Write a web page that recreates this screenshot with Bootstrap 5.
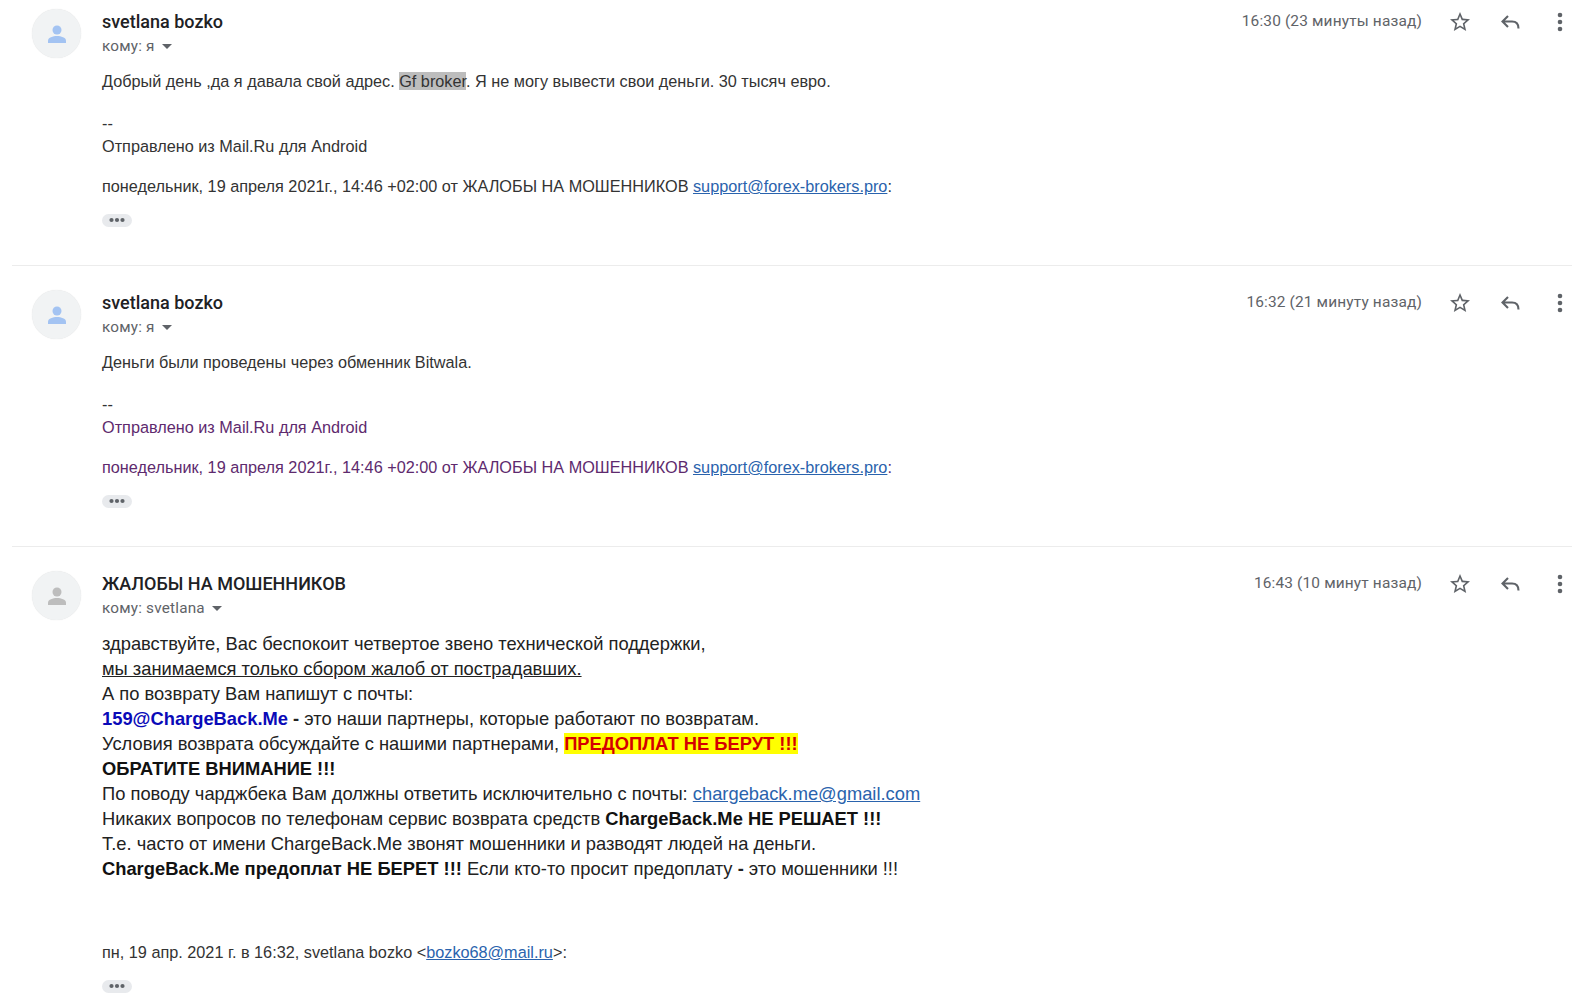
<!DOCTYPE html>
<html lang="ru">
<head>
<meta charset="utf-8">
<title>Переписка</title>
<link href="https://cdn.jsdelivr.net/npm/bootstrap@5.3.0/dist/css/bootstrap.min.css" rel="stylesheet">
<style>
html,body{height:100%;overflow:hidden}
body{background:#fff;color:#222;font-family:"Liberation Sans",Arial,sans-serif}
.mail-list{padding:0 18px 0 12px}
.msg{height:266px;margin-bottom:15px;border-bottom:1px solid #ececec;padding-top:10px}
.msg-last{height:441px;border-bottom:0;margin-bottom:0}
.ava{width:49px;height:49px;border-radius:50%;background:#f1f3f4;margin:-1px 21px 0 20px;flex:none;box-shadow:0 0 1px #ddd}
.msg-main{flex:1;min-width:0}
.sender{font:500 18px/24px Roboto,sans-serif;color:#202124}
.to{font:15.3px/20px Roboto,sans-serif;color:#5f6368;margin-top:2px;letter-spacing:.2px}
.caret-ico{display:inline-block;width:0;height:0;border:5px solid transparent;border-top-color:#5f6368;border-bottom:0;margin-left:3px;vertical-align:2px}
.side{margin-top:-1px}
.when{font:15.45px/24px Roboto,sans-serif;color:#5f6368;letter-spacing:.15px;margin:0 26px 2px 0}
.acts{gap:26px}
.acts svg{display:block;color:#5f6368;fill:currentColor}
.body-s{font-size:16.25px;line-height:23px;color:#333;margin-top:14px}
.gap-l{margin-top:19px}
.gap-m{margin-top:17px}
.hl{background:#bdbdbd}
.lnk{color:#2a63ad;text-decoration:underline}
.pur{color:#5e2a6e}
.more{display:block;width:30px;height:13px;background:#e8eaed;border-radius:7px;margin-top:16px;padding-top:3px}
.more svg{display:block;margin:0 auto;fill:#5f6368}
.body-b{font-size:18.33px;line-height:25px;color:#222;margin-top:13px}
.blue{color:#0a0ab8;font-weight:700}
.warn{background:#ff0;color:#d40000;font-weight:700}
.quote-l{font-size:16.25px;line-height:23px;color:#333;margin-top:60px}
.dark{color:#111}
</style>
</head>
<body>
<svg width="0" height="0" class="position-absolute">
<defs>
<symbol id="i-star" viewBox="0 0 24 24"><path d="M22 9.24l-7.190-.620L12 2 9.190 8.630 2 9.240l5.460 4.730L5.820 21 12 17.270 18.180 21l-1.630-7.030L22 9.240zM12 15.400l-3.760 2.270 1-4.280-3.320-2.880 4.380-.380L12 6.100l1.710 4.040 4.380.380-3.320 2.880 1 4.280L12 15.400z"/></symbol>
<symbol id="i-reply" viewBox="0 0 24 24"><path d="M10 6 4.500 11.500 10 17M4.500 11.500H14c4 0 6.500 2.500 6.500 7" fill="none" stroke="currentColor" stroke-width="2.100"/></symbol>
<symbol id="i-dots" viewBox="0 0 24 24"><circle cx="12" cy="5" r="2.300"/><circle cx="12" cy="12" r="2.300"/><circle cx="12" cy="19" r="2.300"/></symbol>
<symbol id="i-more" viewBox="0 0 18 6"><circle cx="3.500" cy="3" r="2.100"/><circle cx="9" cy="3" r="2.100"/><circle cx="14.500" cy="3" r="2.100"/></symbol>
<symbol id="i-user" viewBox="0 0 24 24"><circle cx="12" cy="8" r="4.500"/><path d="M3 21v-2.500C3 15.500 8 14 12 14s9 1.500 9 4.500V21H3z"/></symbol>
</defs>
</svg>

<div class="mail-list">

<div class="msg d-flex">
  <div class="ava d-flex align-items-center justify-content-center"><svg width="24" height="24" fill="#a3c3f2"><use href="#i-user"/></svg></div>
  <div class="msg-main">
    <div class="d-flex justify-content-between align-items-start">
      <div>
        <div class="sender">svetlana bozko</div>
        <div class="to">кому: я <span class="caret-ico"></span></div>
      </div>
      <div class="side d-flex align-items-center">
        <span class="when">16:30 (23 минуты назад)</span>
        <div class="acts d-flex align-items-center">
          <svg width="24" height="24"><use href="#i-star"/></svg>
          <svg width="24" height="24"><use href="#i-reply"/></svg>
          <svg width="24" height="24"><use href="#i-dots"/></svg>
        </div>
      </div>
    </div>
    <div class="body-s">Добрый день ,да я давала свой адрес. <span class="hl">Gf broker</span>. Я не могу вывести свои деньги. 30 тысяч евро.</div>
    <div class="body-s gap-l">--<br>Отправлено из Mail.Ru для Android</div>
    <div class="body-s gap-m">понедельник, 19 апреля 2021г., 14:46 +02:00 от ЖАЛОБЫ НА МОШЕННИКОВ <a href="#" class="lnk">support@forex-brokers.pro</a>:</div>
    <span class="more"><svg width="18" height="6"><use href="#i-more"/></svg></span>
  </div>
</div>

<div class="msg d-flex">
  <div class="ava d-flex align-items-center justify-content-center"><svg width="24" height="24" fill="#a3c3f2"><use href="#i-user"/></svg></div>
  <div class="msg-main">
    <div class="d-flex justify-content-between align-items-start">
      <div>
        <div class="sender">svetlana bozko</div>
        <div class="to">кому: я <span class="caret-ico"></span></div>
      </div>
      <div class="side d-flex align-items-center">
        <span class="when">16:32 (21 минуту назад)</span>
        <div class="acts d-flex align-items-center">
          <svg width="24" height="24"><use href="#i-star"/></svg>
          <svg width="24" height="24"><use href="#i-reply"/></svg>
          <svg width="24" height="24"><use href="#i-dots"/></svg>
        </div>
      </div>
    </div>
    <div class="body-s">Деньги были проведены через обменник Bitwala.</div>
    <div class="body-s gap-l">--<br><span class="pur">Отправлено из Mail.Ru для Android</span></div>
    <div class="body-s gap-m pur">понедельник, 19 апреля 2021г., 14:46 +02:00 от ЖАЛОБЫ НА МОШЕННИКОВ <a href="#" class="lnk">support@forex-brokers.pro</a>:</div>
    <span class="more"><svg width="18" height="6"><use href="#i-more"/></svg></span>
  </div>
</div>

<div class="msg msg-last d-flex">
  <div class="ava d-flex align-items-center justify-content-center"><svg width="24" height="24" fill="#bdbdbd"><use href="#i-user"/></svg></div>
  <div class="msg-main">
    <div class="d-flex justify-content-between align-items-start">
      <div>
        <div class="sender">ЖАЛОБЫ НА МОШЕННИКОВ</div>
        <div class="to">кому: svetlana <span class="caret-ico"></span></div>
      </div>
      <div class="side d-flex align-items-center">
        <span class="when">16:43 (10 минут назад)</span>
        <div class="acts d-flex align-items-center">
          <svg width="24" height="24"><use href="#i-star"/></svg>
          <svg width="24" height="24"><use href="#i-reply"/></svg>
          <svg width="24" height="24"><use href="#i-dots"/></svg>
        </div>
      </div>
    </div>
    <div class="body-b">
      здравствуйте, Вас беспокоит четвертое звено технической поддержки,<br>
      <u>мы занимаемся только сбором жалоб от пострадавших.</u><br>
      А по возврату Вам напишут с почты:<br>
      <span class="blue">159@ChargeBack.Me</span> <b>-</b> это наши партнеры, которые работают по возвратам.<br>
      Условия возврата обсуждайте с нашими партнерами, <span class="warn">ПРЕДОПЛАТ НЕ БЕРУТ !!!</span><br>
      <b class="dark">ОБРАТИТЕ ВНИМАНИЕ !!!</b><br>
      По поводу чарджбека Вам должны ответить исключительно с почты: <a href="#" class="lnk">chargeback.me@gmail.com</a><br>
      Никаких вопросов по телефонам сервис возврата средств <b class="dark">ChargeBack.Me НЕ РЕШАЕТ !!!</b><br>
      Т.е. часто от имени ChargeBack.Me звонят мошенники и разводят людей на деньги.<br>
      <b class="dark">ChargeBack.Me предоплат НЕ БЕРЕТ !!!</b> Если кто-то просит предоплату <b>-</b> это мошенники !!!
    </div>
    <div class="quote-l">пн, 19 апр. 2021 г. в 16:32, svetlana bozko &lt;<a href="#" class="lnk">bozko68@mail.ru</a>&gt;:</div>
    <span class="more"><svg width="18" height="6"><use href="#i-more"/></svg></span>
  </div>
</div>

</div>
<script src="https://cdn.jsdelivr.net/npm/bootstrap@5.3.0/dist/js/bootstrap.bundle.min.js"></script>
</body>
</html>
